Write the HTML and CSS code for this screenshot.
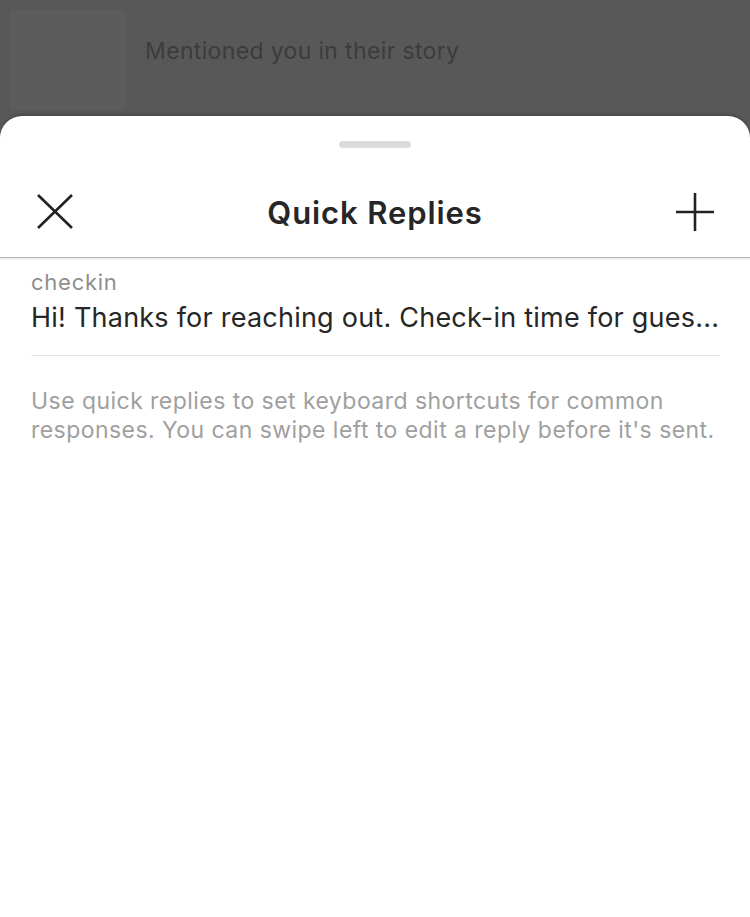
FILE: index.html
```html
<!DOCTYPE html>
<html>
<head>
<meta charset="utf-8">
<link rel="stylesheet" href="styles.css">
</head>
<body>
<div class="backdrop">
  <div class="thumb"></div>
  <div class="bg-text">Mentioned you in their story</div>
</div>
<div class="sheet">
  <div class="handle"></div>
  <div class="header">
    <svg class="icon" width="40" height="40" viewBox="0 0 40 40"><path d="M3 3 L37 36 M37 3 L3 36" stroke="#222" stroke-width="2.6" fill="none"/></svg>
    <div class="title">Quick Replies</div>
    <svg class="icon" width="40" height="40" viewBox="0 0 40 40"><path d="M20 1 V39 M1 20 H39" stroke="#222" stroke-width="2.6" fill="none"/></svg>
  </div>
  <div class="divider"></div>
  <div class="content">
    <div class="reply">
      <div class="reply-name">checkin</div>
      <div class="reply-text">Hi! Thanks for reaching out. Check-in time for gues...</div>
    </div>
    <p class="help">Use quick replies to set keyboard shortcuts for common responses. You can swipe left to edit a reply before it's sent.</p>
  </div>
</div>
</body>
</html>
```
FILE: styles.css
```css
html, body {
  margin: 0;
  padding: 0;
  height: 917px;
  overflow: hidden;
  background: #585858;
  font-family: Inter, "Liberation Sans", Arial, sans-serif;
}
.backdrop {
  height: 116px;
  position: relative;
}
.thumb {
  position: absolute;
  left: 10px;
  top: 10px;
  width: 115px;
  height: 100px;
  background: #5c5c5c;
}
.bg-text {
  position: absolute;
  left: 145px;
  top: 37px;
  font-size: 23px;
  letter-spacing: 0.35px;
  color: #3c3c3c;
}
.sheet {
  background: #fff;
  border-radius: 22px 22px 0 0;
  height: 801px;
  padding-top: 25px;
  box-sizing: border-box;
  box-shadow: 0 -2px 2px rgba(0,0,0,0.15);
}
.handle {
  width: 72px;
  height: 7px;
  border-radius: 4px;
  background: #dcdcdc;
  margin: 0 auto;
}
.header {
  display: flex;
  align-items: center;
  justify-content: space-between;
  padding: 19px 35px 0 35px;
  height: 109px;
  box-sizing: border-box;
}
.title {
  font-size: 31px;
  font-weight: 600;
  letter-spacing: 0.9px;
  color: #262626;
}
.divider {
  height: 1px;
  background: #b3b3b3;
  border-bottom: 2px solid #f2f2f2;
}
.content {
  padding: 0 30px 0 31px;
}
.reply {
  padding-top: 9px;
  padding-bottom: 21px;
  border-bottom: 1px solid #e6e6e6;
}
.reply-name {
  font-size: 22px;
  letter-spacing: 0.75px;
  color: #8e8e8e;
  line-height: 26px;
}
.reply-text {
  font-size: 27px;
  letter-spacing: 0.23px;
  color: #262626;
  line-height: 32px;
  margin-top: 7px;
  white-space: nowrap;
}
.help {
  margin: 31px 0 0 0;
  font-size: 23px;
  letter-spacing: 0.45px;
  line-height: 29px;
  color: #a0a0a0;
}
```
